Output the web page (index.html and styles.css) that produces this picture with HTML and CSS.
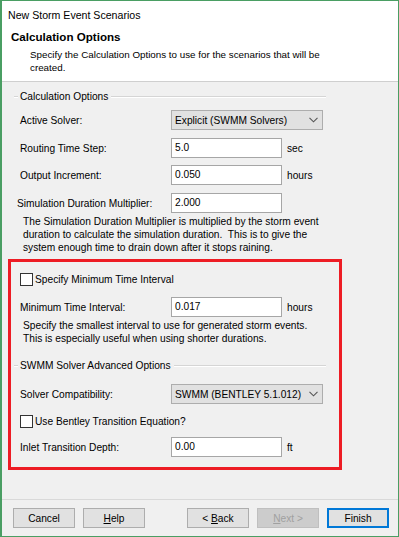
FILE: index.html
```html
<!DOCTYPE html>
<html>
<head>
<meta charset="utf-8">
<title>New Storm Event Scenarios</title>
<link rel="stylesheet" href="styles.css">
</head>
<body>
  <div class="window">
    <div class="header">
      <div class="title">New Storm Event Scenarios</div>
      <div class="heading">Calculation Options</div>
      <div class="intro">Specify the Calculation Options to use for the scenarios that will be<br>created.</div>
    </div>

    <div class="content">
      <div class="section">
        <div class="group-title"><span>Calculation Options</span></div>

        <div class="row row-first">
          <label class="label">Active Solver:</label>
          <div class="combo">
            <span>Explicit (SWMM Solvers)</span>
            <svg width="9" height="6" viewBox="0 0 9 6"><path d="M0.5 0.8 L4.5 4.8 L8.5 0.8" fill="none" stroke="#555" stroke-width="1.1"/></svg>
          </div>
        </div>
        <div class="row">
          <label class="label">Routing Time Step:</label>
          <div class="field">5.0</div>
          <span class="unit">sec</span>
        </div>
        <div class="row row-tight">
          <label class="label">Output Increment:</label>
          <div class="field">0.050</div>
          <span class="unit">hours</span>
        </div>
        <div class="row">
          <label class="label label-wide">Simulation Duration Multiplier:</label>
          <div class="field">2.000</div>
        </div>
        <p class="note">The Simulation Duration Multiplier is multiplied by the storm event<br>duration to calculate the simulation duration.&nbsp; This is to give the<br>system enough time to drain down after it stops raining.</p>
      </div>

      <div class="highlight">
        <div class="check-row check-first">
          <span class="checkbox"></span>
          <span>Specify Minimum Time Interval</span>
        </div>
        <div class="row row-min">
          <label class="label">Minimum Time Interval:</label>
          <div class="field">0.017</div>
          <span class="unit">hours</span>
        </div>
        <p class="note">Specify the smallest interval to use for generated storm events.<br>This is especially useful when using shorter durations.</p>

        <div class="group-title group-second"><span>SWMM Solver Advanced Options</span></div>

        <div class="row row-solver">
          <label class="label">Solver Compatibility:</label>
          <div class="combo">
            <span>SWMM (BENTLEY 5.1.012)</span>
            <svg width="9" height="6" viewBox="0 0 9 6"><path d="M0.5 0.8 L4.5 4.8 L8.5 0.8" fill="none" stroke="#555" stroke-width="1.1"/></svg>
          </div>
        </div>
        <div class="check-row check-bentley">
          <span class="checkbox"></span>
          <span>Use Bentley Transition Equation?</span>
        </div>
        <div class="row row-inlet">
          <label class="label">Inlet Transition Depth:</label>
          <div class="field">0.00</div>
          <span class="unit">ft</span>
        </div>
      </div>
    </div>

    <div class="footer">
      <button class="btn">Cancel</button>
      <button class="btn"><u>H</u>elp</button>
      <span class="spacer"></span>
      <button class="btn">&lt; <u>B</u>ack</button>
      <button class="btn btn-disabled"><u>N</u>ext &gt;</button>
      <button class="btn btn-default">Finish</button>
    </div>
  </div>
</body>
</html>
```

FILE: styles.css
```css
html {
  width: 100%;
  height: 100%;
}
body {
  margin: 0px;
  padding: 0px;
  width: 100%;
  height: 100%;
  overflow: hidden;
  background-color: #f0f0f0;
  font-family: "Liberation Sans", Arial, sans-serif;
  font-size: 10.2px;
  color: #000;
}
.window {
  box-sizing: border-box;
  width: 399px;
  height: 537px;
  border: 1px solid #4a9e63;
  border-left-width: 2px;
  display: flex;
  flex-direction: column;
  background-color: #f0f0f0;
}

/* header */
.header {
  flex: none;
  height: 74px;
  padding: 6px 0 0 6px;
  background-color: #fff;
  border-bottom: 1px solid #cfcfcf;
}
.title {
  font-size: 10.6px;
  line-height: 16px;
}
.heading {
  margin: 6px 0 0 3px;
  font-weight: bold;
  font-size: 11.6px;
  line-height: 16px;
}
.intro {
  margin: 3px 0 0 22px;
  font-size: 9.8px;
  line-height: 13px;
}

/* body */
.content {
  flex: 1;
}
.section {
  padding-left: 12px;
}
.group-title {
  display: flex;
  align-items: center;
  width: 312px;
  height: 12px;
  margin-top: 9px;
  line-height: 12px;
}
.group-title::before,
.group-title::after {
  content: "";
  height: 0;
  border-top: 1px solid #d5d5d5;
  border-bottom: 1px solid #fff;
}
.group-title::before {
  width: 4px;
}
.group-title::after {
  flex: 1;
}
.group-title span {
  padding: 0 3px 0 2px;
}

.row {
  display: flex;
  align-items: center;
  height: 20px;
  margin-top: 8px;
  padding-left: 6px;
}
.row-first {
  margin-top: 7px;
}
.row-tight {
  margin-top: 7px;
}
.label {
  width: 151px;
  flex: none;
}
.label-wide {
  margin-left: -3px;
  width: 154px;
}
.field {
  box-sizing: border-box;
  width: 111px;
  height: 20px;
  padding: 0 3px;
  line-height: 18px;
  background-color: #fff;
  border: 1px solid #a6a6a6;
}
.unit {
  margin-left: 5px;
}
.combo {
  box-sizing: border-box;
  width: 152px;
  height: 20px;
  padding: 0 4px 0 3px;
  display: flex;
  align-items: center;
  justify-content: space-between;
  white-space: nowrap;
  background-color: #e1e1e1;
  border: 1px solid #adadad;
}
.note {
  margin: 2px 0 0 9px;
  line-height: 13px;
}

/* highlighted block */
.highlight {
  box-sizing: border-box;
  width: 334px;
  margin: 5px 0 0 6px;
  padding: 0 0 10px 3px;
  border: 3px solid #ed1c24;
}
.check-row {
  display: flex;
  align-items: center;
  height: 14px;
  padding-left: 6px;
}
.checkbox {
  box-sizing: border-box;
  width: 13px;
  height: 13px;
  margin-right: 2px;
  background-color: #fff;
  border: 1px solid #333;
}
.check-first {
  margin-top: 10px;
}
.row-min {
  margin-top: 11px;
}
.group-second {
  margin-top: 15px;
}
.row-solver {
  margin-top: 12px;
}
.check-bentley {
  margin-top: 10px;
}
.row-inlet {
  margin-top: 9px;
}

/* footer */
.footer {
  flex: none;
  display: flex;
  gap: 8px;
  padding: 8px 9px 8px 11px;
  border-top: 1px solid #d9d9d9;
}
.spacer {
  flex: 1;
}
.btn {
  box-sizing: border-box;
  width: 62px;
  height: 20px;
  padding: 0;
  font: 10.2px "Liberation Sans", Arial, sans-serif;
  color: #000;
  background-color: #e1e1e1;
  border: 1px solid #adadad;
}
.btn-disabled {
  color: #a0a0a0;
  background-color: #cccccc;
  border-color: #bfbfbf;
}
.btn-default {
  border-color: #0078d7;
  box-shadow: inset 0 0 0 1px #0078d7;
}
```
